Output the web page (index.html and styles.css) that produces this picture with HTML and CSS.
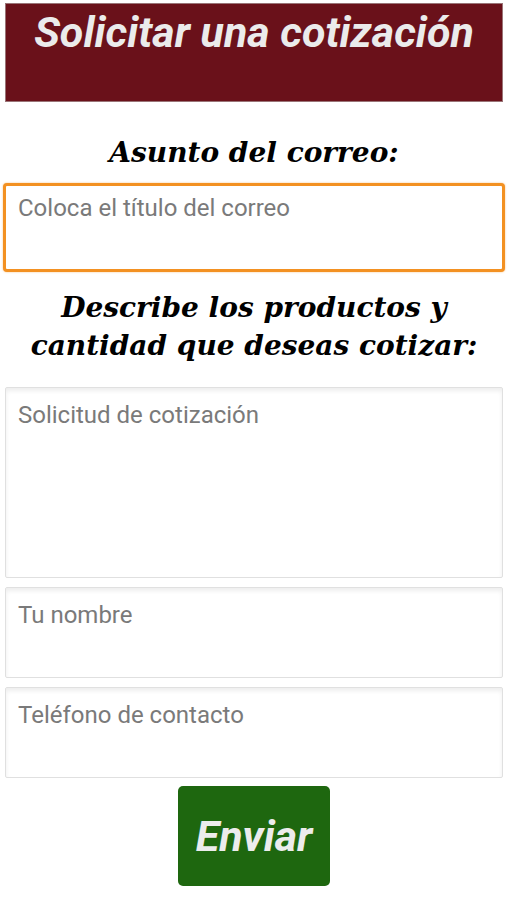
FILE: index.html
```html
<!DOCTYPE html>
<html lang="es">
  <head>
    <meta charset="UTF-8" />
    <meta name="viewport" content="width=device-width, initial-scale=1.0" />
    <title>Solicitar una cotización</title>
    <link rel="stylesheet" href="styles.css">
  </head>
  <body>
    <div id="heading"><h1>Solicitar una cotización</h1></div>
    <form class="quote-form">
      <h2>Asunto del correo:</h2>
      <input type="text" class="field field-focus" placeholder="Coloca el título del correo" />
      <h2 class="two-lines">Describe los productos y<br>cantidad que deseas cotizar:</h2>
      <textarea class="field field-big" placeholder="Solicitud de cotización"></textarea>
      <input type="text" class="field" placeholder="Tu nombre" />
      <input type="text" class="field" placeholder="Teléfono de contacto" />
      <button type="button" class="send">Enviar</button>
    </form>
  </body>
</html>
```

FILE: styles.css
```css
body {
  margin: 0;
  padding: 3px 5px 0;
  background: #fff;
  font-family: Roboto, "Liberation Sans", sans-serif;
}

#heading {
  height: 99px;
  background: #6a111a;
  box-sizing: border-box;
  border: 1px solid #9a7477;
  text-align: center;
}
#heading h1 {
  margin: 0;
  padding-top: 3px;
  font-size: 43px;
  line-height: 50px;
  font-style: italic;
  font-weight: 700;
  color: #ebebeb;
}

.quote-form {
  display: flex;
  flex-direction: column;
  align-items: center;
}

h2 {
  margin: 32px 0 0;
  font-family: "DejaVu Serif", serif;
  font-style: italic;
  font-weight: 700;
  font-size: 28px;
  line-height: 38px;
  color: #000;
  text-align: center;
}
h2.two-lines {
  margin-top: 17px;
}

.field {
  display: block;
  width: 100%;
  height: 91px;
  margin: 0 0 9px;
  padding: 13px 12px 48px;
  box-sizing: border-box;
  border: 1px solid #e0e0e0;
  border-radius: 2px;
  box-shadow: inset 0 3px 4px rgba(0, 0, 0, 0.07);
  font-family: Roboto, sans-serif;
  font-size: 24px;
  line-height: 28px;
  color: #333;
  background: #fff;
  outline: none;
  resize: none;
}
textarea.field {
  padding-bottom: 13px;
}
.field::placeholder {
  color: #7a7a7a;
}
.field-focus {
  width: calc(100% + 4px);
  height: 89px;
  margin: 11px 0 0;
  padding: 9px 12px 49px;
  border: 3px solid #f39122;
  border-radius: 4px;
  box-shadow: 0 0 2px rgba(243, 145, 34, 0.6);
}
.field-big {
  height: 191px;
  margin-top: 22px;
}

.send {
  width: 152px;
  height: 100px;
  margin-top: -1px;
  border: none;
  border-radius: 5px;
  background: #1e670f;
  color: #ececec;
  font-family: Roboto, sans-serif;
  font-style: italic;
  font-weight: 700;
  font-size: 43px;
  cursor: pointer;
}
```
